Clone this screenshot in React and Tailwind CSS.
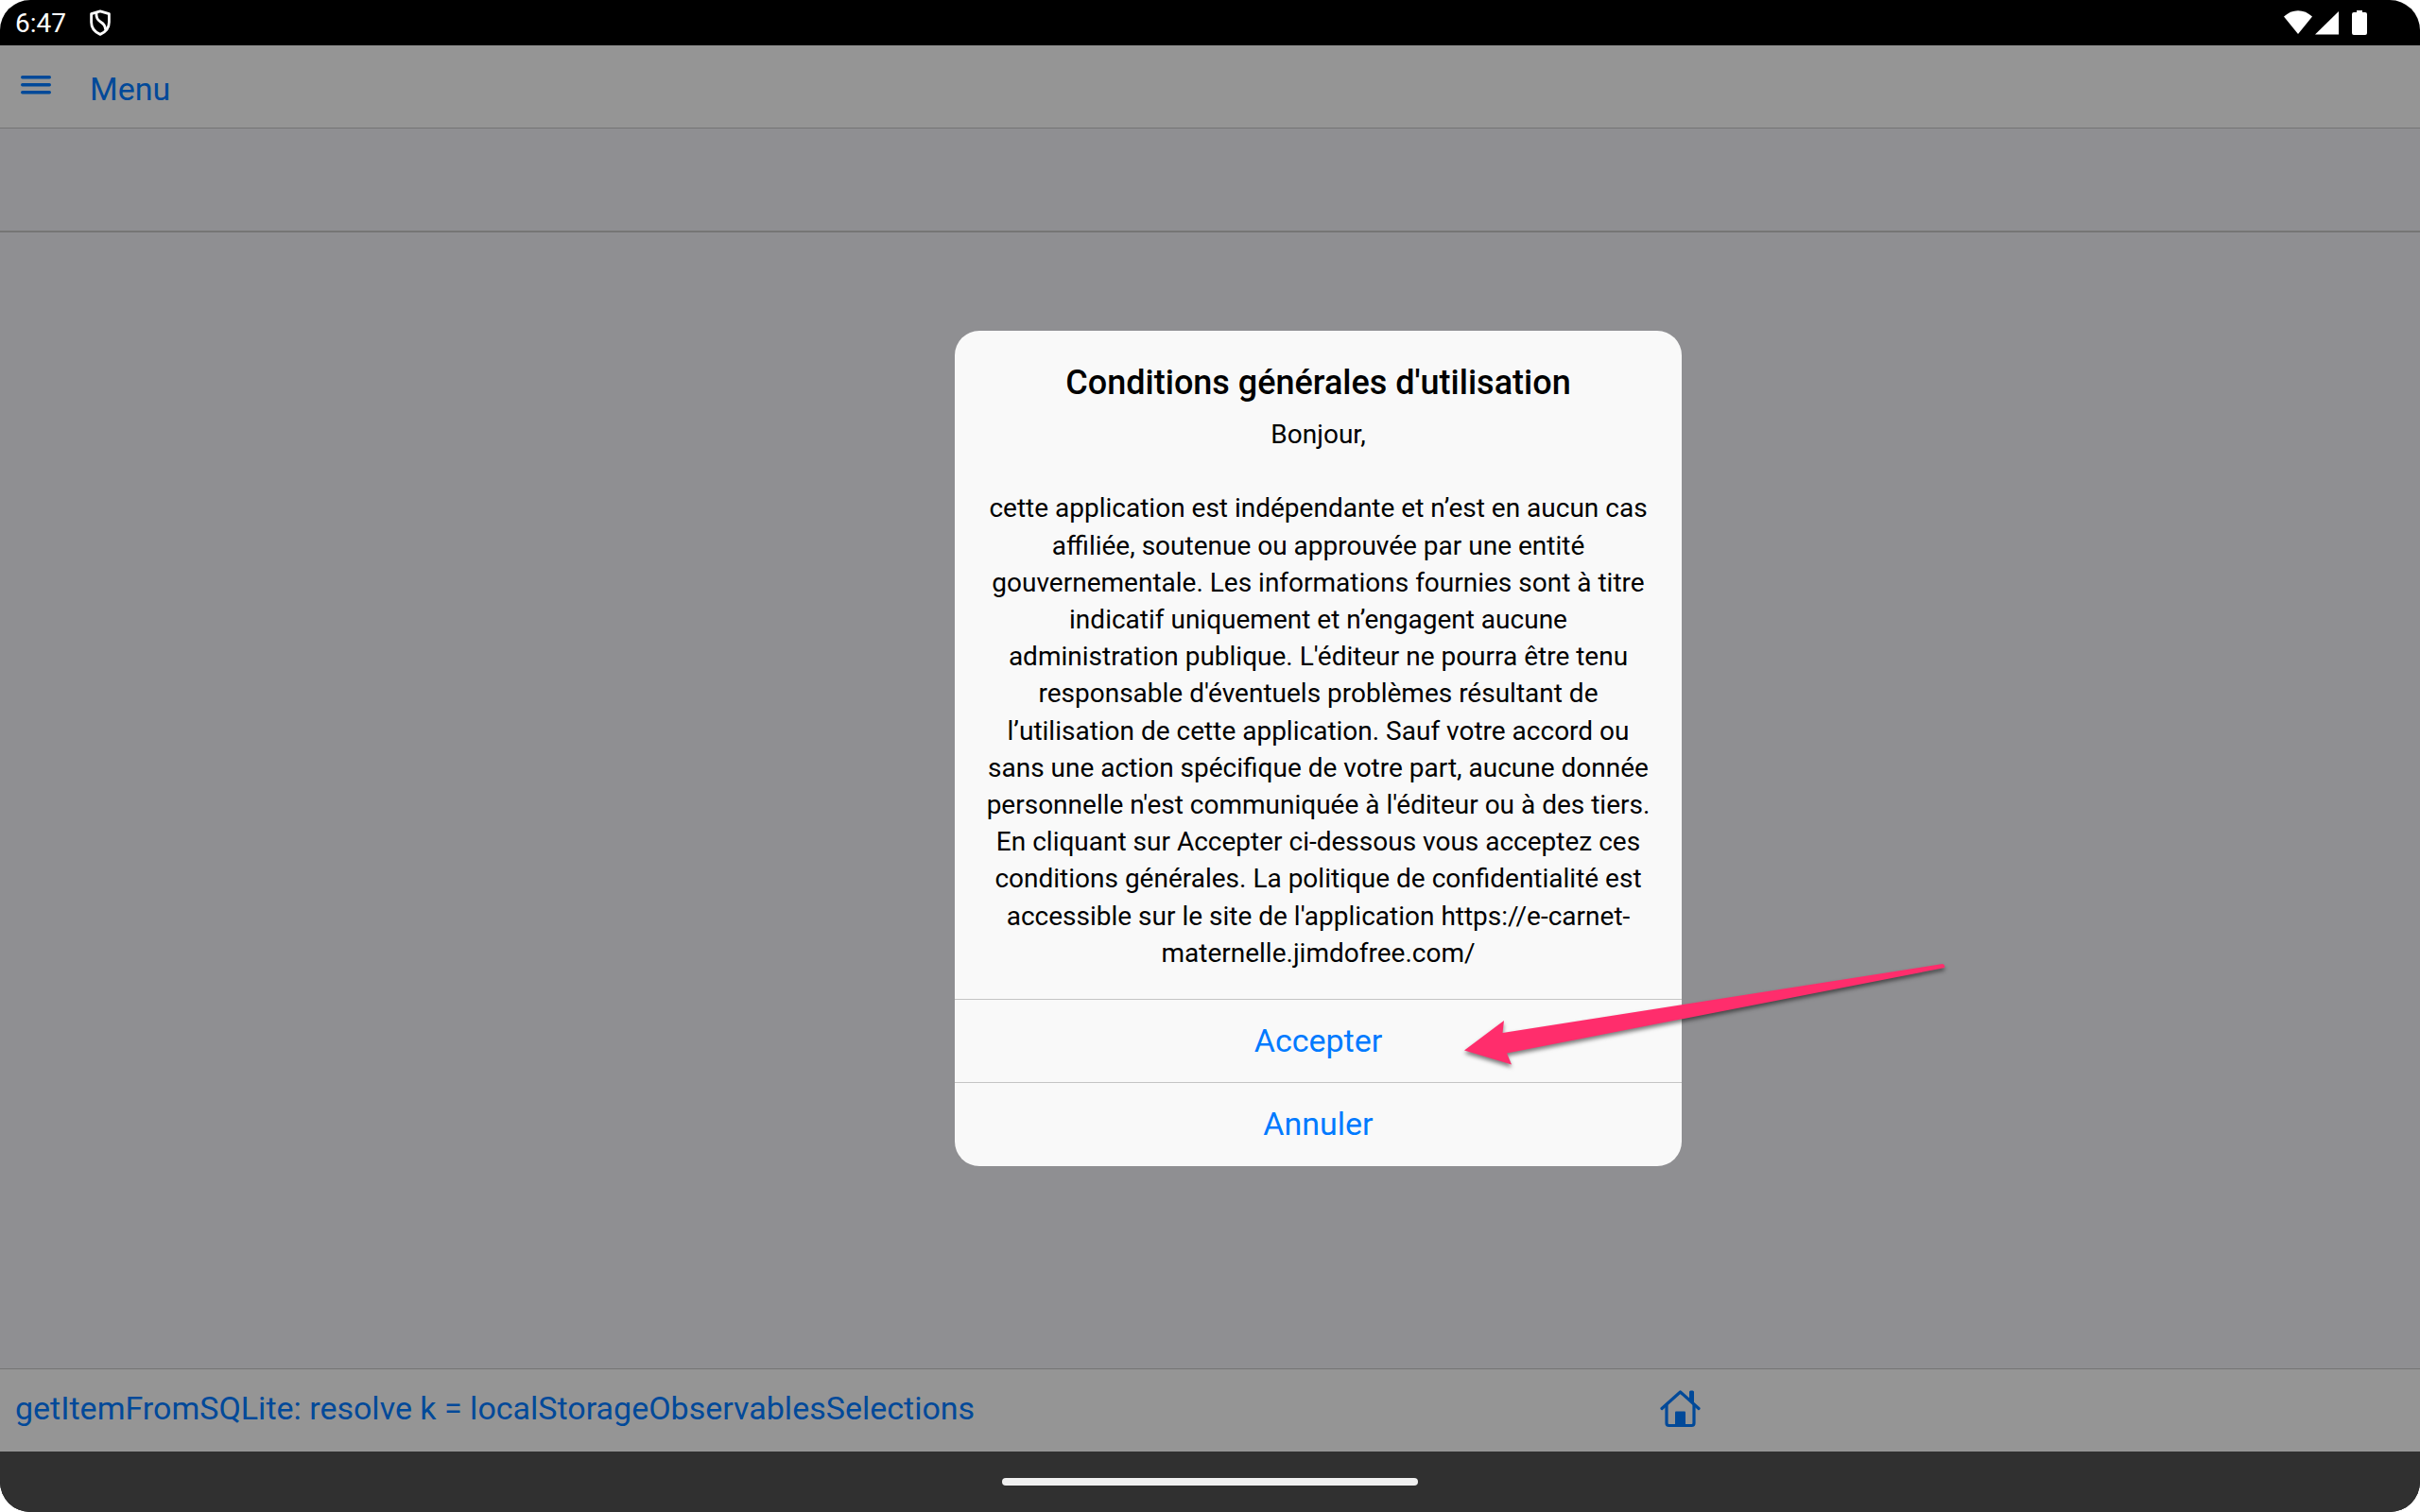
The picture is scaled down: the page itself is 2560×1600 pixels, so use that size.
function MenuIcon() {
  return (
    <svg viewBox="0 0 32 20" className="h-5 w-8" fill="currentColor" aria-hidden="true">
      <rect x="0" y="0" width="32" height="3.5" rx="1.7" />
      <rect x="0" y="8" width="32" height="3.5" rx="1.7" />
      <rect x="0" y="16" width="32" height="3.5" rx="1.7" />
    </svg>
  );
}

function ShieldIcon() {
  return (
    <svg viewBox="0 0 22 28" className="h-7 w-[22px]" fill="none" stroke="white" strokeWidth="2.8" strokeLinejoin="round" aria-hidden="true">
      <path d="M11 1.8 L20.4 4.6 V13.5 C20.4 19.5 16.5 24 11 26.4 C5.5 24 1.6 19.5 1.6 13.5 V4.6 Z" />
      <path d="M7 3 C6.5 8 7.5 11 11.5 13.2 C15 15.2 16.6 17.5 16.5 21.5" />
    </svg>
  );
}

function StatusIcons() {
  return (
    <svg viewBox="0 0 88 26" className="h-[26px] w-[88px]" fill="white" aria-label="Wi-Fi, réseau, batterie" role="img">
      <path d="M0 6.6 C8.5 -2 21.5 -2 30 6.6 L15 25 Z" />
      <path d="M58 1 V25.5 H33 Z" />
      <path d="M77 0 H83 V2 H86 Q88 2 88 4 V24 Q88 26 86 26 H74 Q72 26 72 24 V4 Q72 2 74 2 H77 Z" />
    </svg>
  );
}

function HomeIcon() {
  return (
    <svg viewBox="0 0 44 40" className="h-10 w-11" fill="none" stroke="currentColor" strokeWidth="3.2" strokeLinecap="round" strokeLinejoin="round" aria-hidden="true">
      <path d="M2 19.5 L21.5 2 L41 19.5" />
      <path d="M7 16 V35 Q7 37.5 9.5 37.5 H33.5 Q36 37.5 36 35 V16" />
      <path d="M31 10 V2 Q31 0.5 32.5 0.5 H34.5 Q36 0.5 36 2 V14 Z" fill="currentColor" stroke="none" />
      <rect x="16" y="22.5" width="11" height="15" rx="1" fill="currentColor" stroke="none" />
    </svg>
  );
}

function Arrow() {
  return (
    <svg
      viewBox="0 0 510 110"
      className="pointer-events-none absolute bottom-[106px] left-[538px] h-[110px] w-[510px] max-w-none overflow-visible drop-shadow-[0_3px_2px_rgba(0,0,0,0.5)]"
      fill="#ff2d6c"
      aria-hidden="true"
    >
      <path d="M1 93.5 L43 62 L41.5 75 L507 2 Q510 3 509 6 L46 96.5 L51 108.5 Z" />
    </svg>
  );
}

const message = [
  "Bonjour,",
  "",
  "cette application est indépendante et n’est en aucun cas affiliée, soutenue ou approuvée par une entité gouvernementale. Les informations fournies sont à titre indicatif uniquement et n’engagent aucune administration publique. L'éditeur ne pourra être tenu responsable d'éventuels problèmes résultant de l’utilisation de cette application. Sauf votre accord ou sans une action spécifique de votre part, aucune donnée personnelle n'est communiquée à l'éditeur ou à des tiers. En cliquant sur Accepter ci-dessous vous acceptez ces conditions générales. La politique de confidentialité est accessible sur le site de l'application https://e-carnet-maternelle.jimdofree.com/",
].join("\n");

function TermsDialog() {
  return (
    <div className="absolute inset-0 flex items-center justify-center bg-black/40 pl-[229px]">
      <div className="relative w-[769px]">
        <div role="dialog" aria-modal="true" aria-labelledby="terms-title" className="overflow-hidden rounded-[26px] bg-[#f9f9f9] pb-px text-center text-black">
          <h1 id="terms-title" className="pt-8 text-[36px] leading-[46px] font-medium">
            Conditions générales d'utilisation
          </h1>
          <p className="px-8 pt-3 pb-[29px] text-[28px] leading-[1.4] whitespace-pre-line">{message}</p>
          {["Accepter", "Annuler"].map((label) => (
            <button key={label} type="button" className="block h-[88px] w-full border-t border-[#c4c4c4] text-[34px] text-[#007aff]">
              {label}
            </button>
          ))}
        </div>
        <Arrow />
      </div>
    </div>
  );
}

export default function App() {
  return (
    <div className="bg-white font-['Roboto',sans-serif]">
      <div className="flex min-h-screen flex-col overflow-hidden rounded-[32px] bg-black">
        <div className="flex h-12 items-center pr-14 pl-4 text-[28px] text-white">
          <span className="pt-0.5">6:47</span>
          <span className="ml-[25px]">
            <ShieldIcon />
          </span>
          <span className="ml-auto">
            <StatusIcons />
          </span>
        </div>

        <div className="relative flex flex-1 flex-col bg-[#efeff4] text-[34px] text-[#007aff]">
          <header className="flex h-[88px] items-center border-b border-[#c4c4c4] bg-[#f9f9f9] px-[22px]">
            <button type="button" aria-label="Ouvrir le menu" className="mb-1">
              <MenuIcon />
            </button>
            <button type="button" className="ml-[41px] pt-1.5">
              Menu
            </button>
          </header>
          <div className="h-[110px] border-b-2 border-[#c4c4c4]" />
          <main className="flex-1" />
          <footer className="flex h-[88px] items-center border-t border-[#c4c4c4] bg-[#f9f9f9] pb-1">
            <div className="w-2/3 pl-4">getItemFromSQLite: resolve k = localStorageObservablesSelections</div>
            <button type="button" aria-label="Accueil" className="ml-[49px]">
              <HomeIcon />
            </button>
          </footer>
          <TermsDialog />
        </div>

        <div className="flex h-16 items-center justify-center bg-[#303030]">
          <div className="h-2 w-[440px] rounded-full bg-[#f0f0f0]" />
        </div>
      </div>
    </div>
  );
}
